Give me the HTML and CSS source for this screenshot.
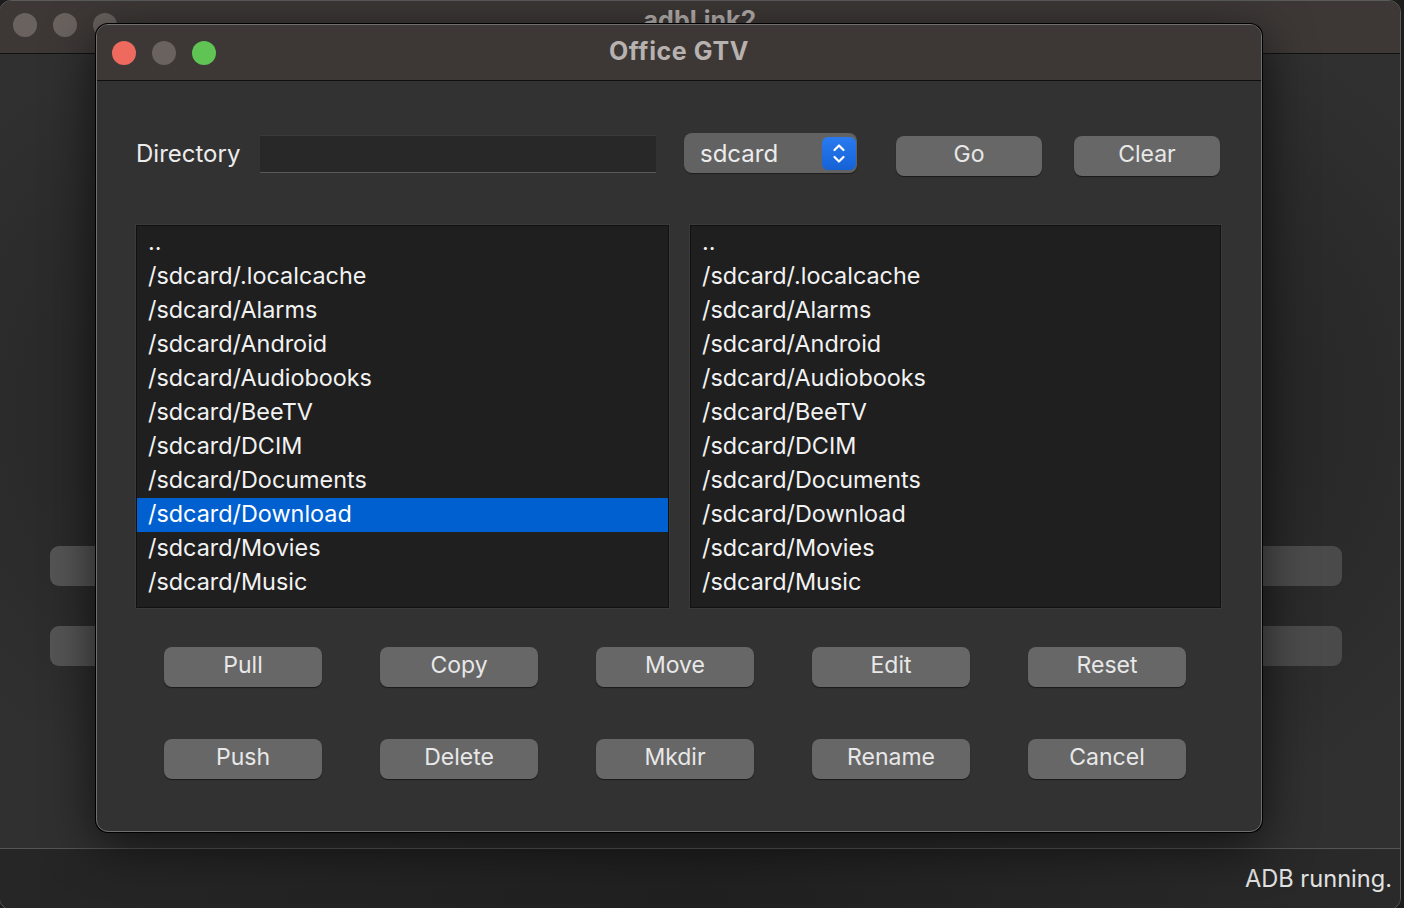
FILE: index.html
```html
<!DOCTYPE html>
<html>
<head>
<meta charset="utf-8">
<link rel="stylesheet" href="styles.css">
</head>
<body>
<div class="desktop">
  <div class="main-window">
    <div class="main-titlebar">
      <div class="lights">
        <span class="light inactive"></span>
        <span class="light inactive"></span>
        <span class="light inactive"></span>
      </div>
      <div class="main-title">adbLink2</div>
    </div>
    <div class="main-content">
      <div class="bg-row"><div class="bg-btn"></div><div class="bg-btn"></div></div>
      <div class="bg-row"><div class="bg-btn"></div><div class="bg-btn"></div></div>
    </div>
    <div class="statusbar">ADB running.</div>
  </div>

  <div class="dialog">
    <div class="titlebar">
      <div class="lights">
        <span class="light red"></span>
        <span class="light inactive"></span>
        <span class="light green"></span>
      </div>
      <div class="title">Office GTV</div>
    </div>
    <div class="dialog-body">
      <div class="dir-row">
        <label class="dir-label">Directory</label>
        <div class="dir-input"></div>
        <div class="select">
          <span class="select-text">sdcard</span>
          <span class="stepper">
            <svg width="34" height="33" viewBox="0 0 34 33">
              <path d="M12.5 13 L17 8.5 L21.5 13" fill="none" stroke="#fff" stroke-width="2.2" stroke-linecap="round" stroke-linejoin="round"/>
              <path d="M12.5 20 L17 24.5 L21.5 20" fill="none" stroke="#fff" stroke-width="2.2" stroke-linecap="round" stroke-linejoin="round"/>
            </svg>
          </span>
        </div>
        <button class="btn go">Go</button>
        <button class="btn clear">Clear</button>
      </div>

      <div class="lists">
        <ul class="list">
          <li>..</li>
          <li>/sdcard/.localcache</li>
          <li>/sdcard/Alarms</li>
          <li>/sdcard/Android</li>
          <li>/sdcard/Audiobooks</li>
          <li>/sdcard/BeeTV</li>
          <li>/sdcard/DCIM</li>
          <li>/sdcard/Documents</li>
          <li class="selected">/sdcard/Download</li>
          <li>/sdcard/Movies</li>
          <li>/sdcard/Music</li>
        </ul>
        <ul class="list">
          <li>..</li>
          <li>/sdcard/.localcache</li>
          <li>/sdcard/Alarms</li>
          <li>/sdcard/Android</li>
          <li>/sdcard/Audiobooks</li>
          <li>/sdcard/BeeTV</li>
          <li>/sdcard/DCIM</li>
          <li>/sdcard/Documents</li>
          <li>/sdcard/Download</li>
          <li>/sdcard/Movies</li>
          <li>/sdcard/Music</li>
        </ul>
      </div>

      <div class="actions">
        <button class="btn">Pull</button>
        <button class="btn">Copy</button>
        <button class="btn">Move</button>
        <button class="btn">Edit</button>
        <button class="btn">Reset</button>
        <button class="btn">Push</button>
        <button class="btn">Delete</button>
        <button class="btn">Mkdir</button>
        <button class="btn">Rename</button>
        <button class="btn">Cancel</button>
      </div>
    </div>
  </div>
</div>
</body>
</html>
```
FILE: styles.css
```css
* { box-sizing: border-box; }
html, body {
  margin: 0;
  padding: 0;
  width: 1404px;
  height: 908px;
  overflow: hidden;
  background: #1c1c1c;
  font-family: "Inter", "Liberation Sans", sans-serif;
}
.desktop {
  position: relative;
  width: 1404px;
  height: 908px;
}
.main-window {
  position: absolute;
  left: -1px;
  top: 0;
  width: 1402px;
  height: 910px;
  border-radius: 12px;
  background: #2f2f2f;
  border: 1px solid #5a5a5a;
  overflow: hidden;
  display: flex;
  flex-direction: column;
}
.main-titlebar {
  height: 53px;
  background: #3d3836;
  border-bottom: 1px solid #111;
  position: relative;
  display: flex;
  align-items: center;
  padding-left: 13px;
  flex-shrink: 0;
}
.main-titlebar .lights { margin-top: -5px; }
.main-title {
  position: absolute;
  left: 0;
  right: 0;
  top: 4px;
  text-align: center;
  font-weight: 700;
  font-size: 25px;
  color: #b3aeac;
}
.lights {
  display: flex;
  gap: 16px;
}
.light {
  width: 24px;
  height: 24px;
  border-radius: 50%;
  display: block;
}
.light.inactive { background: #69625f; }
.light.red { background: #ee6a5f; }
.light.green { background: #5fc454; }

.main-content {
  flex: 1;
  padding-top: 492px;
  background: radial-gradient(ellipse at 50% 45%, #1e1e1e 0%, #262626 55%, #303030 85%);
}
.bg-row {
  display: flex;
  justify-content: space-between;
  padding: 0 58px 0 50px;
  margin-bottom: 40px;
}
.bg-btn {
  width: 300px;
  height: 40px;
  border-radius: 9px;
  background: linear-gradient(90deg, #555 0%, #4a4a4a 100%);
}
.statusbar {
  height: 61px;
  border-top: 1px solid #555;
  background: linear-gradient(90deg, #262626, #202020 50%, #2a2a2a);
  color: #e2e2e2;
  font-size: 23.6px;
  text-align: right;
  padding: 15px 8px 0 0;
  flex-shrink: 0;
}

.dialog {
  position: absolute;
  left: 96px;
  top: 24px;
  width: 1166px;
  height: 808px;
  border-radius: 12px;
  border: 1px solid #6f6f6f;
  box-shadow: 0 0 0 1px #000, 0 12px 50px rgba(0,0,0,0.65);
  background: #323232;
  overflow: hidden;
}
.titlebar {
  height: 56px;
  background: #3d3836;
  border-bottom: 1px solid #0e0e0e;
  position: relative;
  display: flex;
  align-items: center;
  padding-left: 15px;
}
.title {
  position: absolute;
  left: 0;
  right: 0;
  top: 11px;
  text-align: center;
  font-weight: 700;
  font-size: 25px;
  color: #b7b2b0;
  letter-spacing: 0.6px;
}
.dialog-body {
  padding: 53px 40px 0 39px;
}
.dir-row {
  display: flex;
  align-items: center;
  height: 40px;
}
.dir-label {
  font-size: 24px;
  color: #ececec;
  width: 124px;
  padding-bottom: 1px;
}
.dir-input {
  width: 396px;
  height: 38px;
  background: #282828;
  border-top: 1px solid #3a3a3a;
  border-bottom: 1px solid #5a5a5a;
}
.select {
  margin-left: 28px;
  width: 173px;
  height: 40px;
  border-radius: 8px;
  background: #626262;
  box-shadow: 0 1px 1px rgba(0,0,0,0.4);
  display: flex;
  align-items: center;
  justify-content: space-between;
  padding: 0 1px 0 16px;
  margin-top: -2px;
}
.select-text {
  font-size: 24px;
  color: #ececec;
}
.stepper {
  width: 34px;
  height: 33px;
  border-radius: 6px;
  background: linear-gradient(#2a7bf0, #1462d6);
  display: block;
}
.stepper svg { display: block; }
.btn {
  font-family: "Inter", "Liberation Sans", sans-serif;
  height: 40px;
  width: 146px;
  border: none;
  border-radius: 8px;
  background: #676767;
  box-shadow: 0 1px 1px rgba(0,0,0,0.5);
  color: #e8e8e8;
  font-size: 23px;
  padding: 0 0 5px 0;
}
.go { margin-left: 39px; margin-top: 4px; }
.clear { margin-left: 32px; margin-top: 4px; }

.lists {
  margin-top: 51px;
  display: grid;
  grid-template-columns: 533px 531px;
  gap: 21px;
}
.list {
  margin: 0;
  padding: 0;
  list-style: none;
  height: 383px;
  background: #1f1f1f;
  border: 1px solid #111;
  box-shadow: 0 0 0 1px #3a3a3a;
}
.list li {
  height: 34px;
  line-height: 32px;
  font-size: 23.4px;
  color: #f2f2f2;
  padding-left: 11px;
  white-space: nowrap;
}
.list li.selected {
  background: #0060d0;
  color: #fff;
}

.actions {
  margin-top: 39px;
  padding-left: 28px;
  display: grid;
  grid-template-columns: repeat(5, 158px);
  column-gap: 58px;
  row-gap: 52px;
}
.actions .btn { width: 158px; }
```
